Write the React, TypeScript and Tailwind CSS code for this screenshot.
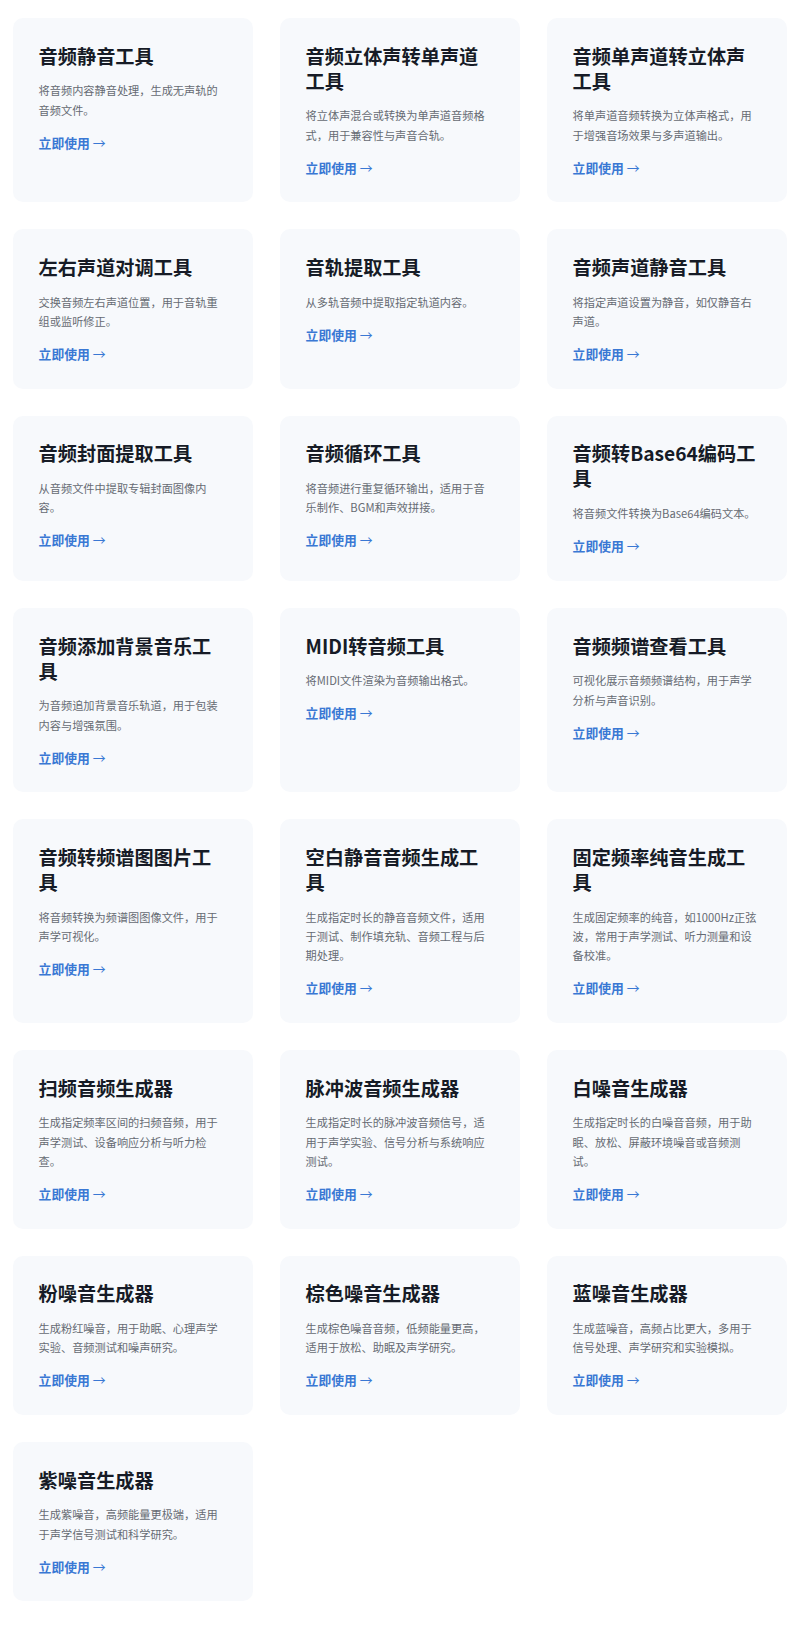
import React from "react";

const tools: { t: string; d: string }[] = [
  { t: "音频静音工具", d: "将音频内容静音处理，生成无声轨的音频文件。" },
  { t: "音频立体声转单声道工具", d: "将立体声混合或转换为单声道音频格式，用于兼容性与声音合轨。" },
  { t: "音频单声道转立体声工具", d: "将单声道音频转换为立体声格式，用于增强音场效果与多声道输出。" },
  { t: "左右声道对调工具", d: "交换音频左右声道位置，用于音轨重组或监听修正。" },
  { t: "音轨提取工具", d: "从多轨音频中提取指定轨道内容。" },
  { t: "音频声道静音工具", d: "将指定声道设置为静音，如仅静音右声道。" },
  { t: "音频封面提取工具", d: "从音频文件中提取专辑封面图像内容。" },
  { t: "音频循环工具", d: "将音频进行重复循环输出，适用于音乐制作、BGM和声效拼接。" },
  { t: "音频转Base64编码工具", d: "将音频文件转换为Base64编码文本。" },
  { t: "音频添加背景音乐工具", d: "为音频追加背景音乐轨道，用于包装内容与增强氛围。" },
  { t: "MIDI转音频工具", d: "将MIDI文件渲染为音频输出格式。" },
  { t: "音频频谱查看工具", d: "可视化展示音频频谱结构，用于声学分析与声音识别。" },
  { t: "音频转频谱图图片工具", d: "将音频转换为频谱图图像文件，用于声学可视化。" },
  { t: "空白静音音频生成工具", d: "生成指定时长的静音音频文件，适用于测试、制作填充轨、音频工程与后期处理。" },
  { t: "固定频率纯音生成工具", d: "生成固定频率的纯音，如1000Hz正弦波，常用于声学测试、听力测量和设备校准。" },
  { t: "扫频音频生成器", d: "生成指定频率区间的扫频音频，用于声学测试、设备响应分析与听力检查。" },
  { t: "脉冲波音频生成器", d: "生成指定时长的脉冲波音频信号，适用于声学实验、信号分析与系统响应测试。" },
  { t: "白噪音生成器", d: "生成指定时长的白噪音音频，用于助眠、放松、屏蔽环境噪音或音频测试。" },
  { t: "粉噪音生成器", d: "生成粉红噪音，用于助眠、心理声学实验、音频测试和噪声研究。" },
  { t: "棕色噪音生成器", d: "生成棕色噪音音频，低频能量更高，适用于放松、助眠及声学研究。" },
  { t: "蓝噪音生成器", d: "生成蓝噪音，高频占比更大，多用于信号处理、声学研究和实验模拟。" },
  { t: "紫噪音生成器", d: "生成紫噪音，高频能量更极端，适用于声学信号测试和科学研究。" },
];

export default function App() {
  return (
    <div
      className="min-h-[1646px] bg-white px-[13px] pt-[18px] pb-[44px]"
      style={{ fontFamily: '"Noto Sans CJK SC", "Noto Sans", sans-serif' }}
    >
      <div className="grid grid-cols-3 gap-[27px]">
        {tools.map((x) => (
          <div
            key={x.t}
            className="flex flex-col rounded-[10px] bg-[#f7f9fc] p-[25.6px]"
          >
            <h3 className="text-[19.2px] font-bold leading-[25px] text-[#161b26]">
              {x.t}
            </h3>
            <p className="mt-[12.8px] text-[11.2px] leading-[19.2px] text-[#666b73]">
              {x.d}
            </p>
            <a className="mt-[12.8px] text-[12.8px] font-semibold leading-[19.2px] text-[#3a78d4]">
              立即使用 <span className="font-normal">→</span>
            </a>
          </div>
        ))}
      </div>
    </div>
  );
}
